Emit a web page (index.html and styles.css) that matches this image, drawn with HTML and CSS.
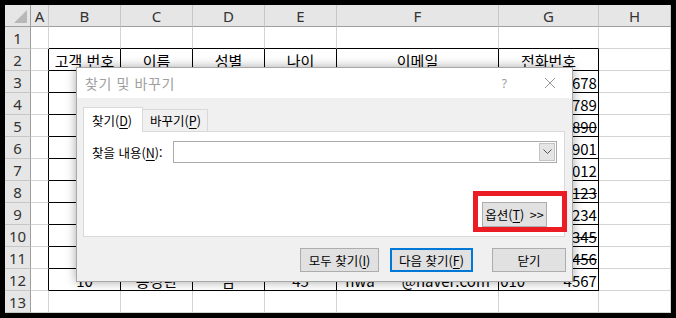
FILE: index.html
```html
<!DOCTYPE html>
<html lang="ko">
<head>
<meta charset="utf-8">
<title>찾기 및 바꾸기</title>
<link rel="stylesheet" href="styles.css">
</head>
<body>
<div class="frame">
  <div class="sheet">
    <div class="corner"></div><div class="ch">A</div><div class="ch">B</div><div class="ch">C</div><div class="ch">D</div><div class="ch">E</div><div class="ch">F</div><div class="ch">G</div><div class="ch">H</div>

    <div class="rh">1</div><div class="c"></div><div class="c tt"></div><div class="c tt"></div><div class="c tt"></div><div class="c tt"></div><div class="c tt"></div><div class="c tt"></div><div class="c"></div>

    <div class="rh">2</div><div class="c tl"></div><div class="c t">고객 번호</div><div class="c t">이름</div><div class="c t">성별</div><div class="c t">나이</div><div class="c t">이메일</div><div class="c t">전화번호</div><div class="c"></div>

    <div class="rh">3</div><div class="c tl"></div><div class="c t">1</div><div class="c t">김민수</div><div class="c t">남</div><div class="c t">28</div><div class="c t">min****@naver.com</div><div class="c t">010-****-5678</div><div class="c"></div>

    <div class="rh">4</div><div class="c tl"></div><div class="c t">2</div><div class="c t">이영희</div><div class="c t">여</div><div class="c t">34</div><div class="c t">you****@naver.com</div><div class="c t">010-****-6789</div><div class="c"></div>

    <div class="rh">5</div><div class="c tl"></div><div class="c t">3</div><div class="c t">박지훈</div><div class="c t">남</div><div class="c t">41</div><div class="c t">jih****@naver.com</div><div class="c t s">010-****-7890</div><div class="c"></div>

    <div class="rh">6</div><div class="c tl"></div><div class="c t">4</div><div class="c t">최수진</div><div class="c t">여</div><div class="c t">25</div><div class="c t">suj****@naver.com</div><div class="c t">010-****-8901</div><div class="c"></div>

    <div class="rh">7</div><div class="c tl"></div><div class="c t">5</div><div class="c t">정우성</div><div class="c t">남</div><div class="c t">37</div><div class="c t">woo****@naver.com</div><div class="c t">010-****-9012</div><div class="c"></div>

    <div class="rh">8</div><div class="c tl"></div><div class="c t">6</div><div class="c t">강하늘</div><div class="c t">남</div><div class="c t">30</div><div class="c t">sky****@naver.com</div><div class="c t s">010-****-0123</div><div class="c"></div>

    <div class="rh">9</div><div class="c tl"></div><div class="c t">7</div><div class="c t">윤서연</div><div class="c t">여</div><div class="c t">22</div><div class="c t">seo****@naver.com</div><div class="c t">010-****-1234</div><div class="c"></div>

    <div class="rh">10</div><div class="c tl"></div><div class="c t">8</div><div class="c t">한지민</div><div class="c t">여</div><div class="c t">39</div><div class="c t">jim****@naver.com</div><div class="c t s">010-****-2345</div><div class="c"></div>

    <div class="rh">11</div><div class="c tl"></div><div class="c t">9</div><div class="c t">오세훈</div><div class="c t">남</div><div class="c t">52</div><div class="c t">seh****@naver.com</div><div class="c t s">010-****-3456</div><div class="c"></div>

    <div class="rh">12</div><div class="c tl"></div><div class="c t">10</div><div class="c t">홍경란</div><div class="c t">남</div><div class="c t">45</div><div class="c t">hwa****@naver.com</div><div class="c t">010-****-4567</div><div class="c"></div>

    <div class="rh">13</div><div class="c"></div><div class="c"></div><div class="c"></div><div class="c"></div><div class="c"></div><div class="c"></div><div class="c"></div><div class="c"></div>
  </div>

  <div class="dialog">
    <div class="titlebar">
      <span class="title">찾기 및 바꾸기</span>
      <span class="help">?</span>
      <span class="close">
        <svg width="12" height="12" viewBox="0 0 12 12"><path d="M1 1 L11 11 M11 1 L1 11" stroke="#9a9a9a" stroke-width="1" fill="none"/></svg>
      </span>
    </div>
    <div class="body">
      <div class="tabs">
        <div class="tab active">찾기(<u>D</u>)</div>
        <div class="tab">바꾸기(<u>P</u>)</div>
      </div>
      <div class="panel">
        <div class="findrow">
          <span class="label">찾을 내용(<u>N</u>):</span>
          <div class="combo">
            <div class="combo-btn">
              <svg width="9" height="6" viewBox="0 0 9 6"><path d="M0.5 0.5 L4.5 4.5 L8.5 0.5" stroke="#555" stroke-width="1" fill="none"/></svg>
            </div>
          </div>
        </div>
        <button class="btn options">옵션(<u>T</u>) &gt;&gt;</button>
      </div>
      <div class="actions">
        <button class="btn findall">모두 찾기(<u>I</u>)</button>
        <button class="btn findnext">다음 찾기(<u>F</u>)</button>
        <button class="btn closebtn">닫기</button>
      </div>
    </div>
  </div>

  <div class="callout"></div>
</div>
</body>
</html>
```

FILE: styles.css
```css
* { box-sizing: border-box; }

html, body {
  margin: 0;
  padding: 0;
  background: #000;
}

.frame {
  position: relative;
  width: 676px;
  height: 318px;
  padding: 5px;
  background: #000;
}

.sheet {
  display: grid;
  grid-template-columns: 26px 18px 72px 72px 72px 72px 162px 100px 72px;
  grid-auto-rows: 22px;
  width: 666px;
  height: 308px;
  background: #fff;
  font-family: "Noto Sans CJK KR", "Noto Sans", sans-serif;
  font-size: 15px;
  color: #000;
}

.corner {
  background: #e6e6e6;
  border-right: 1px solid #9e9e9e;
  border-bottom: 1px solid #9e9e9e;
  position: relative;
}
.corner::after {
  content: "";
  position: absolute;
  right: 3px;
  bottom: 3px;
  width: 13px;
  height: 13px;
  background: #b8b8b8;
  clip-path: polygon(100% 0, 100% 100%, 0 100%);
}

.ch {
  background: #e6e6e6;
  border-right: 1px solid #c6c6c6;
  border-bottom: 1px solid #9e9e9e;
  display: flex;
  align-items: center;
  justify-content: center;
  color: #333;
  font-family: "Noto Sans", sans-serif;
  font-size: 15px;
}

.rh {
  background: #e6e6e6;
  border-right: 1px solid #9e9e9e;
  border-bottom: 1px solid #c6c6c6;
  display: flex;
  align-items: center;
  justify-content: center;
  color: #333;
  font-family: "Noto Sans", sans-serif;
  font-size: 15px;
}

.c {
  border-right: 1px solid #d4d4d4;
  border-bottom: 1px solid #d4d4d4;
  display: flex;
  align-items: center;
  justify-content: center;
  white-space: nowrap;
  overflow: hidden;
  line-height: 1;
  padding-top: 1px;
}
.c.tt { border-bottom-color: #000; }
.c.tl { border-right-color: #000; }
.c.t { border-right-color: #000; border-bottom-color: #000; }
.c.s { text-decoration: line-through; }

/* Dialog */
.dialog {
  position: absolute;
  left: 76px;
  top: 67px;
  width: 497px;
  height: 215px;
  background: #f0f0f0;
  border: 1px solid #a8a8a8;
  box-shadow: 0 0 10px rgba(0, 0, 0, 0.35);
  display: flex;
  flex-direction: column;
  font-family: "Noto Sans CJK KR", "Noto Sans", sans-serif;
  font-size: 12px;
  color: #000;
}

.titlebar {
  height: 30px;
  flex: none;
  background: #fff;
  display: flex;
  align-items: center;
  padding-left: 8px;
  color: #a0a0a0;
}
.title {
  font-size: 14px;
  letter-spacing: 0.6px;
}
.help {
  margin-left: auto;
  font-family: "Noto Sans", sans-serif;
  font-size: 12px;
  color: #9a9a9a;
  margin-right: 37px;
}
.close {
  display: flex;
  margin-right: 16px;
}

.body {
  flex: 1;
  display: flex;
  flex-direction: column;
  padding: 9px 7px 9px 6px;
}

.tabs {
  display: flex;
  align-items: flex-end;
  height: 24px;
  flex: none;
}
.tab {
  height: 22px;
  border: 1px solid #d9d9d9;
  border-bottom: none;
  border-left: none;
  background: #f0f0f0;
  display: flex;
  align-items: center;
  padding: 0 0 0 7px;
  width: 65px;
  font-size: 12.5px;
  white-space: nowrap;
}
.tab.active {
  height: 25px;
  width: 60px;
  margin-bottom: -1px;
  background: #fff;
  border-left: 1px solid #d9d9d9;
  padding-left: 8px;
  position: relative;
  z-index: 1;
}
.tab u, .label u, .btn u { text-underline-offset: 2px; }

.panel {
  height: 106px;
  flex: none;
  background: #fff;
  border: 1px solid #d9d9d9;
  display: flex;
  flex-direction: column;
  padding: 9px 7px 9px 8px;
}

.findrow {
  display: flex;
  align-items: center;
  height: 22px;
}
.label {
  width: 81px;
  flex: none;
  font-size: 12.5px;
  white-space: nowrap;
}
.combo {
  flex: 1;
  height: 22px;
  border: 1px solid #ababab;
  background: #fff;
  display: flex;
  justify-content: flex-end;
  padding: 1px;
}
.combo-btn {
  width: 16px;
  background: #e5e5e5;
  border: 1px solid #c4c4c4;
  display: flex;
  align-items: center;
  justify-content: center;
}

.btn {
  font-family: "Noto Sans CJK KR", "Noto Sans", sans-serif;
  font-size: 12.5px;
  color: #000;
  background: #e1e1e1;
  border: 1px solid #adadad;
  padding: 0;
  display: flex;
  align-items: center;
  justify-content: center;
  white-space: nowrap;
}
.options {
  margin-top: auto;
  align-self: flex-end;
  width: 65px;
  height: 25px;
  margin-right: 10px;
  word-spacing: 2px;
}

.actions {
  display: flex;
  justify-content: flex-end;
  margin-top: 11px;
  height: 24px;
}
.findall { width: 79px; height: 24px; }
.findnext {
  width: 83px;
  height: 24px;
  margin-left: 11px;
  border: 2px solid #0078d7;
}
.closebtn {
  width: 74px;
  height: 24px;
  margin-left: 19px;
  margin-right: -1px;
}

.callout {
  position: absolute;
  left: 473px;
  top: 191px;
  width: 94px;
  height: 41px;
  border: 5px solid #ec1c24;
}
```
